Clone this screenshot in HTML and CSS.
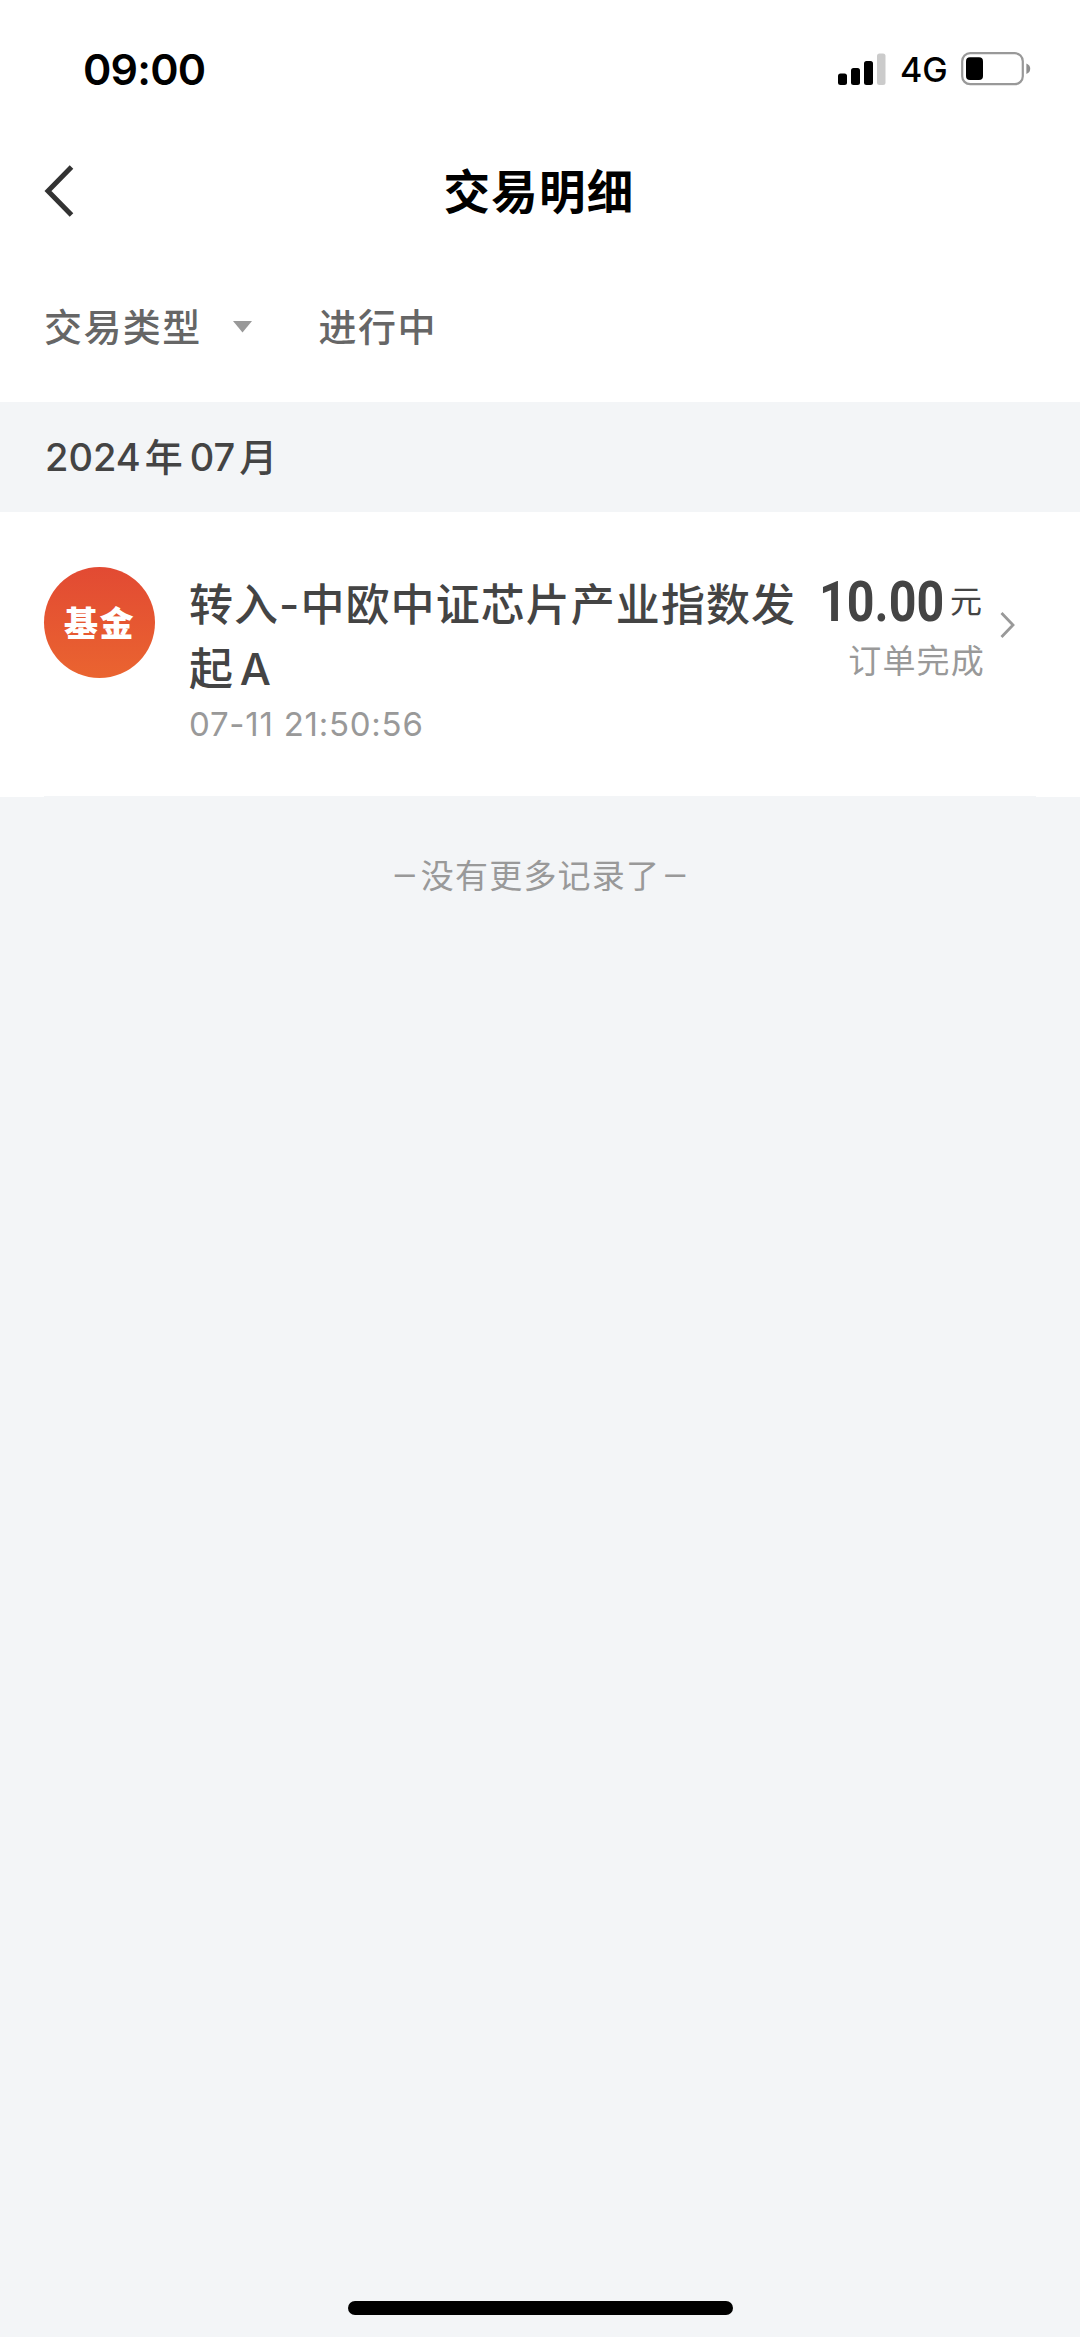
FILE: index.html
```html
<!DOCTYPE html>
<html lang="zh-CN">
<head>
<meta charset="utf-8">
<title>交易明细</title>
<link rel="stylesheet" href="styles.css">
</head>
<body>
<div class="screen">
  <header class="status-bar">
    <span class="clock">09:00</span>
    <div class="indicators">
      <svg class="signal" width="48" height="32" viewBox="0 0 48 32">
        <rect x="0" y="20.5" width="9" height="11.5" rx="2.5"/>
        <rect x="13" y="15" width="9" height="17" rx="2.5"/>
        <rect x="26" y="8" width="9" height="24" rx="2.5"/>
        <rect x="39" y="0.5" width="8.5" height="31.5" rx="2.5" fill="#cbcbcb"/>
      </svg>
      <span class="network">4G</span>
      <svg class="battery" width="70" height="34" viewBox="0 0 70 34">
        <rect x="1.2" y="1.2" width="60.6" height="31" rx="8" fill="none" stroke="#999" stroke-width="2.2"/>
        <rect x="5" y="5.3" width="17" height="22.7" rx="4"/>
        <path d="M65.4 11.5Q69.2 13 69.2 16.7Q69.2 20.4 65.4 22Z" fill="#8e8e8e"/>
      </svg>
    </div>
  </header>

  <nav class="nav">
    <svg class="back" width="32" height="52" viewBox="0 0 32 52">
      <path d="M27.5 2L4 26L27.5 50" fill="none" stroke="#333" stroke-width="5"/>
    </svg>
    <h1 class="nav-title">交易明细</h1>
  </nav>

  <div class="filters">
    <span class="filter">交易类型</span>
    <svg class="caret" width="19" height="12" viewBox="0 0 19 12"><path d="M0 0H19L9.5 11.5Z" fill="#999"/></svg>
    <span class="filter">进行中</span>
  </div>

  <h2 class="month"><span>2024</span><span class="han">年</span><span>07</span><span class="han">月</span></h2>

  <article class="record">
    <div class="badge">基金</div>
    <div class="detail">
      <p class="name">转入-中欧中证芯片产业指数发起 A</p>
      <time class="time">07-11 21:50:56</time>
    </div>
    <div class="amount">
      <p class="sum"><span class="value">10.00</span><span class="unit">元</span></p>
      <p class="state">订单完成</p>
    </div>
    <svg class="more" width="16" height="28" viewBox="0 0 16 28">
      <path d="M1.5 2L13 14L1.5 26" fill="none" stroke="#999" stroke-width="2.8"/>
    </svg>
  </article>

  <p class="end"><span class="dash">–</span><span class="end-text">没有更多记录了</span><span class="dash">–</span></p>

  <div class="home"></div>
</div>
</body>
</html>
```

FILE: styles.css
```css
* { box-sizing: border-box; margin: 0; padding: 0; }

body {
  background: #f3f5f7;
  color: #444;
  font-family: "Inter", "Noto Sans CJK SC", sans-serif;
}

svg { display: block; flex: none; }

.screen {
  display: flex;
  flex-direction: column;
  width: 1080px;
  height: 2337px;
}

.status-bar {
  display: flex;
  justify-content: space-between;
  align-items: center;
  height: 138px;
  padding: 0 49px 0 83px;
  background: #fff;
  color: #000;
}
.clock { font-size: 43px; font-weight: 600; line-height: 50px; letter-spacing: -.8px; }
.indicators { display: flex; align-items: center; }
.network { width: 45px; margin: 2px 16px 0 14px; font-size: 34px; font-weight: 500; line-height: 40px; white-space: nowrap; }

.nav {
  display: grid;
  grid-template-columns: 1fr auto 1fr;
  align-items: center;
  height: 102px;
  padding: 0 44px;
  background: #fff;
}
.back { margin-top: 3px; }
.nav-title {
  color: #000;
  font-family: "Noto Sans CJK SC", sans-serif;
  font-size: 46.5px;
  font-weight: 700;
  line-height: 64px;
  letter-spacing: 1.3px;
  margin-left: -2px;
}

.filters {
  display: flex;
  align-items: center;
  height: 162px;
  padding: 7px 44px 0;
  background: #fff;
  color: #666;
}
.filter {
  font-family: "Noto Sans CJK SC", sans-serif;
  font-size: 38px;
  font-weight: 500;
  line-height: 50px;
  letter-spacing: 1.4px;
}
.caret { margin: 4px 67px 0 31px; }

.month {
  display: flex;
  align-items: center;
  height: 110px;
  padding-left: 45px;
  font-size: 38px;
  font-weight: 500;
  line-height: 50px;
}
.han { margin: 0 7px 0 4px; }

/* the hairline under a record is inset from both screen edges */
.record {
  display: flex;
  align-items: flex-start;
  height: 285px;
  padding: 55px 44px 0;
  background: linear-gradient(#f3f5f7, #f3f5f7) 44px 100% / 992px 1px no-repeat #fff;
}
.badge {
  flex: none;
  width: 111px;
  height: 111px;
  border-radius: 50%;
  background: linear-gradient(#e24a33, #ea6430);
  color: #fff;
  font-family: "Noto Sans CJK SC", sans-serif;
  font-size: 34px;
  font-weight: 900;
  line-height: 109px;
  letter-spacing: 1.4px;
  text-align: center;
}
.detail { flex: none; width: 620px; margin: 7px 0 0 34px; }
.name { font-size: 44px; font-weight: 500; line-height: 63.5px; letter-spacing: 1.05px; word-spacing: -7px; }
.time { display: block; margin-top: 5px; color: #999; font-size: 33px; line-height: 36px; letter-spacing: .75px; }
.amount { flex: none; width: 176px; margin-top: 5px; text-align: right; }
.sum { display: flex; justify-content: flex-end; align-items: center; height: 60px; padding-right: 3px; }
.value {
  font-family: "Roboto", sans-serif;
  font-size: 55px;
  font-weight: 700;
  line-height: 60px;
  transform: scaleX(.88);
  transform-origin: right;
}
.unit { margin-left: 6px; font-size: 32px; line-height: 40px; }
.state {
  margin-top: 5px;
  color: #999;
  font-family: "Noto Sans CJK SC", sans-serif;
  font-size: 33px;
  line-height: 44px;
  letter-spacing: 1.2px;
  white-space: nowrap;
}
.more { margin: 44px 0 0 15px; }

.end {
  display: flex;
  justify-content: center;
  align-items: center;
  height: 154px;
  color: #999;
  font-size: 33px;
  line-height: 44px;
}
.dash { font-size: 40px; font-weight: 300; }
.end-text { margin: 0 5px 0 6px; font-family: "Noto Sans CJK SC", sans-serif; letter-spacing: 1.2px; }

.home {
  width: 385px;
  height: 14px;
  margin: auto auto 22px;
  border-radius: 7px;
  background: #000;
}
```
